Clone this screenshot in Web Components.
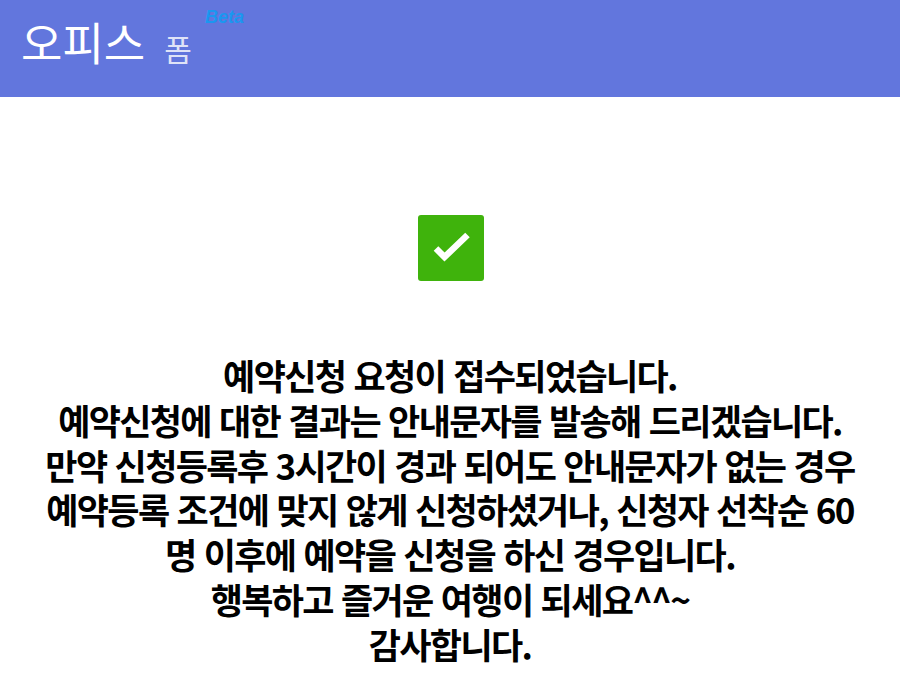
<!DOCTYPE html>
<html lang="ko">
<head>
<meta charset="utf-8">
<title>오피스 폼</title>
<style>
  html, body { margin: 0; padding: 0; background: #fff; }
  body { font-family: "Noto Sans CJK KR", "Noto Sans", sans-serif; overflow: hidden; height: 675px; }
</style>
</head>
<body>
<office-header></office-header>
<done-panel>
  예약신청 요청이 접수되었습니다.<br>
  예약신청에 대한 결과는 안내문자를 발송해 드리겠습니다.<br>
  만약 신청등록후 3시간이 경과 되어도 안내문자가 없는 경우 예약등록 조건에 맞지 않게 신청하셨거나, 신청자 선착순 60 명 이후에 예약을 신청을 하신 경우입니다.<br>
  행복하고 즐거운 여행이 되세요^^~<br>
  감사합니다.
</done-panel>
<script>
class OfficeHeader extends HTMLElement {
  constructor() {
    super();
    this.attachShadow({ mode: "open" });
    this.shadowRoot.innerHTML = `
      <style>
        :host { display: block; height: 97px; background: #6276dd; color: #fff; }
        .brand { display: flex; align-items: baseline; padding: 12px 0 0 21px; position: relative; }
        .name { font-size: 45px; font-weight: 400; line-height: 60px; }
        .sub { font-size: 30px; font-weight: 400; margin-left: 19px; color: #dfe3f7; }
        .beta { position: absolute; left: 205px; top: 7px; font: italic bold 18px "Liberation Sans", sans-serif; color: #1a97f0; }
      </style>
      <div class="brand">
        <span class="name">오피스</span><span class="sub">폼</span>
        <span class="beta">Beta</span>
      </div>`;
  }
}

class DonePanel extends HTMLElement {
  constructor() {
    super();
    this.attachShadow({ mode: "open" });
    this.shadowRoot.innerHTML = `
      <style>
        :host { display: block; text-align: center; }
        .check { display: flex; justify-content: center; padding: 118px 0 0 1px; }
        svg { display: block; }
        .msg {
          box-sizing: border-box; width: 830px; margin: 72px auto 0;
          font-size: 35px; font-weight: 700; line-height: 44.8px; letter-spacing: -1.65px; color: #000;
          word-break: keep-all;
        }
      </style>
      <div class="check">
        <svg width="66" height="66" viewBox="0 0 66 66" aria-hidden="true">
          <rect width="66" height="66" rx="3" fill="#3fb30c"/>
          <path d="M18 33.5 L26.5 42 L49.5 20" fill="none" stroke="#fff" stroke-width="6.5"/>
        </svg>
      </div>
      <div class="msg"><slot></slot></div>`;
  }
}

customElements.define("office-header", OfficeHeader);
customElements.define("done-panel", DonePanel);
</script>
</body>
</html>
